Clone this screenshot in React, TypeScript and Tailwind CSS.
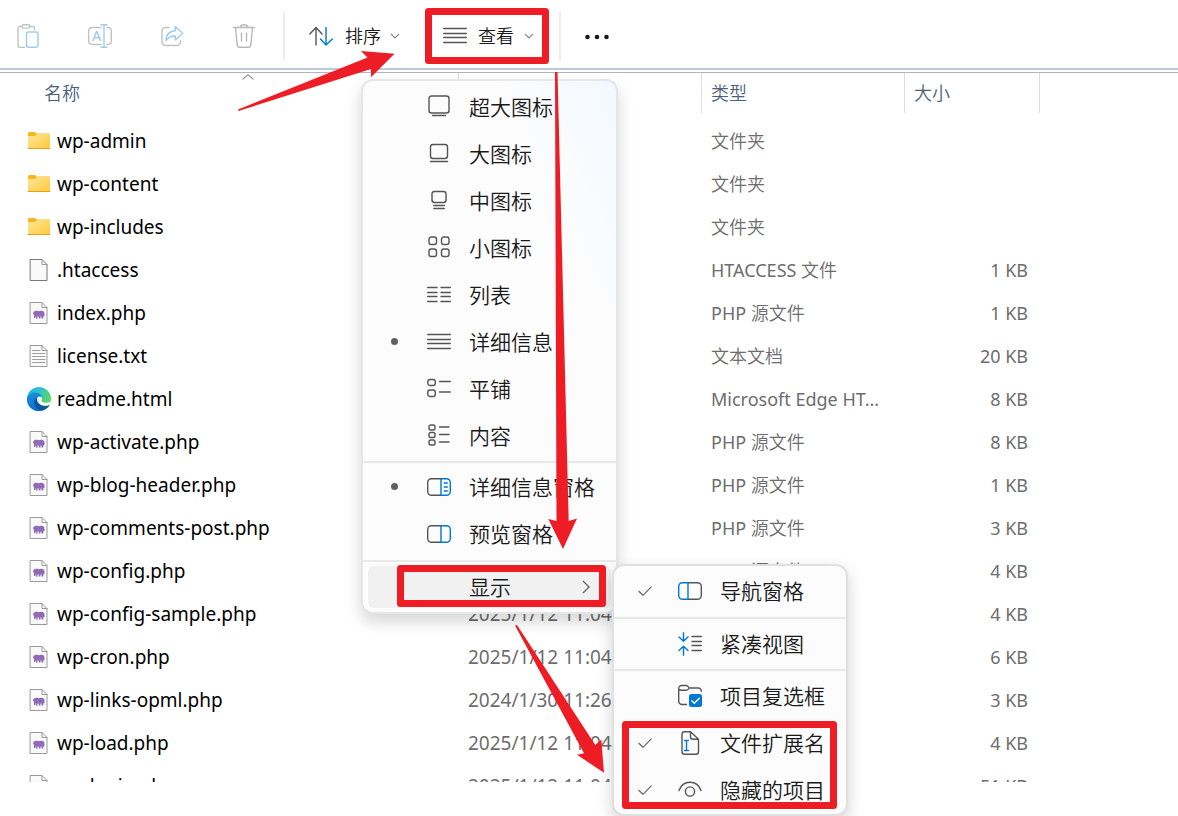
import type { ReactNode } from "react";

type IconProps = { children: ReactNode; className?: string };

const Icon = ({ children, className = "" }: IconProps) => (
  <svg
    viewBox="0 0 24 24"
    className={`h-6 w-6 shrink-0 ${className}`}
    fill="none"
    stroke="#555555"
    strokeWidth="1.4"
    strokeLinecap="round"
    strokeLinejoin="round"
    aria-hidden="true"
  >
    {children}
  </svg>
);

const ChevronDown = () => (
  <svg
    viewBox="0 0 10 6"
    className="h-1.5 w-2.5 shrink-0"
    fill="none"
    stroke="#8a8a8a"
    strokeWidth="1.2"
    aria-hidden="true"
  >
    <path d="M1 1l4 4 4-4" />
  </svg>
);

const PasteIcon = () => (
  <Icon>
    <g stroke="#c2c2c2">
      <path d="M6 2.5H4a2 2 0 0 0-2 2v17a2 2 0 0 0 2 2H8.5" />
      <path d="M14 2.5h2.5a2 2 0 0 1 2 2V5.5" />
      <rect x="6" y=".7" width="8" height="3.4" rx="1.7" />
    </g>
    <rect x="10.5" y="8" width="11.5" height="15.3" rx="2" stroke="#9fcbee" />
  </Icon>
);

const RenameIcon = () => (
  <Icon>
    <path
      d="M13 3.5H4A3.5 3.5 0 0 0 .7 7v10A3.5 3.5 0 0 0 4 20.5h9M19 3.5h1A3.5 3.5 0 0 1 23.3 7v10a3.5 3.5 0 0 1-3.3 3.5h-1"
      stroke="#c2c2c2"
    />
    <path d="M13 .7h6M16 .7v22.6M13 23.3h6" stroke="#9fcbee" />
    <text
      x="8.5"
      y="17"
      textAnchor="middle"
      fontSize="14"
      fontFamily="Noto Sans"
      fontWeight="500"
      fill="#9fcbee"
      stroke="none"
    >
      A
    </text>
  </Icon>
);

const ShareIcon = () => (
  <Icon>
    <path
      d="M9 3.5H5.5a3.5 3.5 0 0 0-3.5 3.5v11a3.5 3.5 0 0 0 3.5 3.5h11.5a3.5 3.5 0 0 0 3.5-3.5v-1"
      stroke="#c2c2c2"
    />
    <path
      d="M15.3 2.8v4C9.5 7 6.2 11 5.8 16.5c2.5-3.3 5.5-4.6 9.5-4.5v4l7.5-6.8z"
      stroke="#9fcbee"
    />
  </Icon>
);

const DeleteIcon = () => (
  <Icon>
    <path
      d="M1.5 3.5h21M8 3.5C8.5 1.5 10 .8 12 .8s3.5.7 4 2.7M3.5 3.5l1.7 17.7a2.2 2.2 0 0 0 2.2 2h9.2a2.2 2.2 0 0 0 2.2-2L20.5 3.5M9.5 9v8M14.5 9v8"
      stroke="#b8b8b8"
    />
  </Icon>
);

const SortIcon = () => (
  <Icon>
    <path d="M7 21V3.5M.8 10L7 3.5l6 6.5" />
    <path d="M17 3.5V21M11.5 15L17 21l6.3-6" stroke="#0078d4" />
  </Icon>
);

const LinesIcon = () => (
  <Icon>
    <path d="M.7 4.5h22.6M.7 9.5h22.6M.7 13.5h22.6M.7 18.5h22.6" />
  </Icon>
);

const ExtraLargeIcon = () => (
  <Icon>
    <rect x="2" y="1" width="20" height="17" rx="2.5" />
    <path d="M5.5 20.5h13" />
  </Icon>
);

const LargeIcon = () => (
  <Icon>
    <rect x="3.5" y="2.5" width="17" height="14" rx="2.5" />
    <path d="M3.5 19.5h17" />
  </Icon>
);

const MediumIcon = () => (
  <Icon>
    <rect x="5" y="2.5" width="14" height="11" rx="2.5" />
    <path d="M6.8 16.5h10.5M6.8 19.5h10.5" />
  </Icon>
);

const SmallIcon = () => (
  <Icon>
    <rect x="2" y="1" width="7.5" height="7.5" rx="2.2" />
    <rect x="14.5" y="1" width="7.5" height="7.5" rx="2.2" />
    <rect x="2" y="13" width="7.5" height="7.5" rx="2.2" />
    <rect x="14.5" y="13" width="7.5" height="7.5" rx="2.2" />
  </Icon>
);

const ListIcon = () => (
  <Icon>
    <path d="M.7 4.5h9.3M14 4.5h9.3M.7 9.5h9.3M14 9.5h9.3M.7 13.5h9.3M14 13.5h9.3M.7 18.5h9.3M14 18.5h9.3" />
  </Icon>
);

const TilesIcon = () => (
  <Icon>
    <rect x=".8" y="2.5" width="7.5" height="6" rx="2.2" />
    <rect x=".8" y="13" width="7.5" height="6.5" rx="2.2" />
    <path d="M12.5 4.5h10.8M12.5 15h10.8" />
  </Icon>
);

const ContentIcon = () => (
  <Icon>
    <rect x="2" y="1" width="6" height="5" rx="1.8" />
    <rect x="2" y="8.5" width="6" height="5" rx="1.8" />
    <rect x="2" y="16" width="6" height="5" rx="1.8" />
    <path d="M12.5 3h9.5M12.5 10.5h9.5M12.5 18h9.5" />
  </Icon>
);

const DetailsPaneIcon = () => (
  <Icon>
    <path d="M14 3.7H4.5A3.8 3.8 0 0 0 .7 7.5v9a3.8 3.8 0 0 0 3.8 3.8H14" />
    <path
      d="M14 3.7h5.5a3.8 3.8 0 0 1 3.8 3.8v9a3.8 3.8 0 0 1-3.8 3.8H14zM17.3 8h3M17.3 12h3M17.3 16h3"
      stroke="#0078d4"
    />
  </Icon>
);

const PreviewPaneIcon = () => (
  <Icon>
    <path d="M14 3.7H4.5A3.8 3.8 0 0 0 .7 7.5v9a3.8 3.8 0 0 0 3.8 3.8H14" />
    <path
      d="M14 3.7h5.5a3.8 3.8 0 0 1 3.8 3.8v9a3.8 3.8 0 0 1-3.8 3.8H14z"
      stroke="#0078d4"
    />
  </Icon>
);

const NavPaneIcon = () => (
  <Icon>
    <path d="M10 3.7h9.5a3.8 3.8 0 0 1 3.8 3.8v9a3.8 3.8 0 0 1-3.8 3.8H10" />
    <path
      d="M10 3.7H4.5A3.8 3.8 0 0 0 .7 7.5v9a3.8 3.8 0 0 0 3.8 3.8H10z"
      stroke="#0078d4"
    />
  </Icon>
);

const CompactIcon = () => (
  <Icon>
    <path
      d="M5.5.7v8.5M1 5l4.5 4.3L10 5M5.5 23.3v-9M1 18.5l4.5-4.3 4.5 4.3"
      stroke="#0078d4"
    />
    <path d="M14 4.5h9.3M14 9.5h9.3M14 13.5h9.3M14 18.5h9.3" />
  </Icon>
);

const ItemCheckIcon = () => (
  <Icon>
    <path d="M8.5 20.5H4A3.3 3.3 0 0 1 .7 17.2V4.5A3 3 0 0 1 3.7 1.5H8.2c1.5 0 2 .8 3 2.5h9a3.2 3.2 0 0 1 3.1 3.3M.9 5.5c.6.6 1.5.7 2.5.7h4.8c1.5 0 2.2-.9 3-2.2" />
    <rect x="11" y="10" width="13" height="13" rx="2.5" fill="#0078d4" stroke="none" />
    <path d="M13.8 16.8l2.5 2.5 5-5" stroke="#ffffff" />
  </Icon>
);

const ExtensionIcon = () => (
  <Icon>
    <path d="M12.5.8H6.5a2.5 2.5 0 0 0-2.5 2.5v17.4a2.5 2.5 0 0 0 2.5 2.5h11.5a2.5 2.5 0 0 0 2.5-2.5V8.3zM12.5.8v5a2.5 2.5 0 0 0 2.5 2.5h5.5" />
    <path d="M6.5 9.5h4M8.5 9.5v10M6.5 19.5h4" stroke="#0078d4" />
  </Icon>
);

const EyeIcon = () => (
  <Icon>
    <path d="M1 12.5C2.8 7 7 4.2 12 4.2s9.2 2.8 11 8.3" />
    <circle cx="12" cy="13.5" r="4.6" />
  </Icon>
);

const CheckMark = () => (
  <svg
    viewBox="0 0 14 10"
    className="mb-px h-2.5 w-3.5"
    fill="none"
    stroke="#666666"
    strokeWidth="1.2"
    aria-hidden="true"
  >
    <path d="M.5 5l4.5 4.3L13.5.7" />
  </svg>
);

type FileKind = "folder" | "file" | "php" | "text" | "edge";

const FileIcon = ({ kind }: { kind: FileKind }) => {
  if (kind === "folder") {
    return (
      <Icon>
        <path d="M1 4.5a1.5 1.5 0 0 1 1.5-1.5h5.5l1.5 1.5H23V10H1z" fill="#f8b51d" stroke="none" />
        <path d="M1 7h7l2-2h13v15H1z" fill="url(#folder)" stroke="none" />
        <path d="M1 19.5h22" stroke="#e5a31d" strokeWidth="1" />
      </Icon>
    );
  }

  if (kind === "edge") {
    return (
      <Icon>
        <g stroke="none">
          <circle cx="12" cy="12" r="12" fill="url(#edgeTop)" />
          <path
            d="M0 12C.5 8 4 5.5 8 5.5c4.5 0 7 3 7 5.5-.5-1-1.5-1.5-3-1.5-3 0-4.5 3-3.5 6.5 1 3.5 4 6.5 8 7-1.5.7-3 1-4.5 1C5 24-.5 18.5 0 12z"
            fill="url(#edgeBlue)"
          />
          <path
            d="M9.5 10.5c-3.5 2-3 7 0 10.2 2 2.1 4.5 3.3 7.5 2.3 2.8-1.2 4.8-3.2 5.8-5.2-4 2.2-10.3.8-12.3-3.3-.7-1.5-.5-3-1-4z"
            fill="#0f559f"
          />
          <path
            d="M10.5 11c.8-1.6 3.8-1.8 4.5 0 .4 1.1-1 1.8-.5 3 .8 1.8 5.5 2.6 9 .8.4 1.2 0 2.2-.7 3-4 2.2-10.3.8-12-2.8-.6-1.5-.8-3-.3-4z"
            fill="#ffffff"
          />
        </g>
      </Icon>
    );
  }

  return (
    <Icon>
      <path
        d="M3.5 1.5h11.5l5 5v16h-16.5z"
        fill="#fafafa"
        stroke={kind === "file" ? "#777777" : "#9a9a9a"}
        strokeWidth="1"
      />
      <path d="M15 1.5v5h5" stroke="#9a9a9a" strokeWidth="1" />
      {kind === "text" && (
        <path
          d="M5.5 6.5H13M5.5 9.5h12.5M5.5 12.5h12.5M5.5 15.5h12.5M5.5 18.5h12.5"
          stroke="#a0a0a0"
          strokeWidth="1"
        />
      )}
      {kind === "php" && (
        <path
          d="M6.500 11c1.5-1.5 3.5-1.5 5-.8 2-.8 4.5-.7 5.7 1 .4 1 .3 2.5.3 3.8l-1 .2-.3 2.3h-1.7v-2h-1v2h-1.7v-2h-1.3v2.3H9.2v-2.3H8.5v1.5H7V14c-1-.8-1.2-2-.5-3z"
          fill="#8f6bb5"
          stroke="none"
        />
      )}
    </Icon>
  );
};

type FileRow = {
  name: string;
  kind: FileKind;
  date?: string;
  app?: string;
  type?: string;
  size?: string;
};

const files: FileRow[] = [
  { name: "wp-admin", kind: "folder", type: "文件夹" },
  { name: "wp-content", kind: "folder", type: "文件夹" },
  { name: "wp-includes", kind: "folder", type: "文件夹" },
  { name: ".htaccess", kind: "file", app: "HTACCESS ", type: "文件", size: "1 KB" },
  { name: "index.php", kind: "php", app: "PHP ", type: "源文件", size: "1 KB" },
  { name: "license.txt", kind: "text", type: "文本文档", size: "20 KB" },
  { name: "readme.html", kind: "edge", app: "Microsoft Edge HT...", size: "8 KB" },
  { name: "wp-activate.php", kind: "php", app: "PHP ", type: "源文件", size: "8 KB" },
  { name: "wp-blog-header.php", kind: "php", app: "PHP ", type: "源文件", size: "1 KB" },
  { name: "wp-comments-post.php", kind: "php", app: "PHP ", type: "源文件", size: "3 KB" },
  { name: "wp-config.php", kind: "php", app: "PHP ", type: "源文件", size: "4 KB" },
  { name: "wp-config-sample.php", kind: "php", date: "2025/1/12 11:04", size: "4 KB" },
  { name: "wp-cron.php", kind: "php", date: "2025/1/12 11:04", size: "6 KB" },
  { name: "wp-links-opml.php", kind: "php", date: "2024/1/30 11:26", size: "3 KB" },
  { name: "wp-load.php", kind: "php", date: "2025/1/12 11:04", size: "4 KB" },
  { name: "wp-login.php", kind: "php", date: "2025/1/12 11:04", size: "51 KB" },
];

type MenuRowProps = {
  icon: ReactNode;
  label: string;
  mark?: "dot" | "check";
};

const MenuRow = ({ icon, label, mark }: MenuRowProps) => (
  <button
    type="button"
    role={mark === "check" ? "menuitemcheckbox" : "menuitemradio"}
    aria-checked={mark !== undefined}
    className="flex h-[47px] w-full items-center text-left"
  >
    <span className="flex w-16 shrink-0 justify-center pr-0.5">
      {mark === "dot" && (
        <span className="mb-0.5 h-[7px] w-[7px] rounded-full bg-[#606060]" />
      )}
      {mark === "check" && <CheckMark />}
    </span>
    <span className="mb-px">{icon}</span>
    <span className="ml-[18px] whitespace-nowrap">{label}</span>
  </button>
);

const Separator = () => <hr className="border-0 border-t-2 border-[#e9e9e9]" />;

const Toolbar = () => (
  <header className="flex h-[70px] items-center border-b-2 border-[#bcc8d8] pt-1 pl-4 text-lg font-[350]">
    <div className="flex items-center gap-12">
      <button type="button" aria-label="粘贴">
        <PasteIcon />
      </button>
      <button type="button" aria-label="重命名">
        <RenameIcon />
      </button>
      <button type="button" aria-label="共享">
        <ShareIcon />
      </button>
      <button type="button" aria-label="删除">
        <DeleteIcon />
      </button>
    </div>

    <span className="ml-[27px] h-12 w-0.5 bg-[#ededed]" />

    <button type="button" className="ml-6 flex items-center">
      <SortIcon />
      <span className="mr-[9px] ml-3">排序</span>
      <ChevronDown />
    </button>

    <button type="button" className="ml-[43px] flex items-center">
      <LinesIcon />
      <span className="mr-[10px] ml-[11px]">查看</span>
      <ChevronDown />
    </button>

    <span className="ml-[25px] h-12 w-0.5 bg-[#ededed]" />

    <button type="button" aria-label="更多" className="ml-6">
      <Icon>
        <g fill="#1a1a1a" stroke="none">
          <circle cx="2.5" cy="13" r="2.3" />
          <circle cx="12" cy="13" r="2.3" />
          <circle cx="21.5" cy="13" r="2.3" />
        </g>
      </Icon>
    </button>
  </header>
);

const FileTable = () => (
  <table className="w-full table-fixed border-collapse text-lg">
    <colgroup>
      <col className="w-[459px]" />
      <col className="w-[243px]" />
      <col className="w-[203px]" />
      <col className="w-[135px]" />
      <col />
    </colgroup>
    <thead className="text-left text-[#4c607a]">
      <tr>
        <th className="relative p-0 font-[350]">
          <div className="mb-1.5 flex h-10 items-center border-r border-[#dedede] pl-11">
            名称
          </div>
          <svg
            viewBox="0 0 12 6"
            className="absolute top-px left-[242px] h-1.5 w-3"
            fill="none"
            stroke="#666666"
            aria-hidden="true"
          >
            <path d="M.5 5.5L6 .7l5.5 4.8" />
          </svg>
        </th>
        <th className="p-0">
          <div className="mb-1.5 h-10 border-r border-[#dedede]" />
        </th>
        <th className="p-0 font-[350]">
          <div className="mb-1.5 flex h-10 items-center border-r border-[#dedede] pl-[9px]">
            类型
          </div>
        </th>
        <th className="p-0 font-[350]">
          <div className="mb-1.5 flex h-10 items-center border-r border-[#dedede] pl-[9px]">
            大小
          </div>
        </th>
        <th className="p-0" />
      </tr>
    </thead>
    <tbody className="text-[#6d6d6d]">
      {files.map((file) => (
        <tr key={file.name} className="h-[43px]">
          <td className="p-0 pt-0.5 pl-[27px] text-[19px] text-black">
            <div className="flex items-center gap-1.5">
              <FileIcon kind={file.kind} />
              {file.name}
            </div>
          </td>
          <td className="p-0 pt-0.5 pl-[9px] text-[19px] whitespace-nowrap">{file.date}</td>
          <td className="p-0 pl-[9px] whitespace-nowrap">
            {file.app}
            <span className="font-[350]">{file.type}</span>
          </td>
          <td className="p-0 pr-3 text-right whitespace-nowrap">{file.size}</td>
          <td />
        </tr>
      ))}
    </tbody>
  </table>
);

const ViewMenu = () => (
  <div
    role="menu"
    aria-label="查看"
    className="absolute top-[79px] left-[361px] w-[257px] rounded-xl border-2 border-[#e6e6e6] bg-[#fcfcfc] bg-linear-to-bl from-[#f3f9ff] via-[#fcfcfc] via-25% to-[#fcfcfc] text-[21px] font-[350] text-[#1a1a1a] shadow-[0_8px_16px_rgba(0,0,0,0.16)]"
  >
    <div className="pt-[3px] pb-px">
      <MenuRow icon={<ExtraLargeIcon />} label="超大图标" />
      <MenuRow icon={<LargeIcon />} label="大图标" />
      <MenuRow icon={<MediumIcon />} label="中图标" />
      <MenuRow icon={<SmallIcon />} label="小图标" />
      <MenuRow icon={<ListIcon />} label="列表" />
      <MenuRow icon={<LinesIcon />} label="详细信息" mark="dot" />
      <MenuRow icon={<TilesIcon />} label="平铺" />
      <MenuRow icon={<ContentIcon />} label="内容" />
    </div>
    <Separator />
    <div className="pt-px pb-0.5">
      <MenuRow icon={<DetailsPaneIcon />} label="详细信息窗格" mark="dot" />
      <MenuRow icon={<PreviewPaneIcon />} label="预览窗格" />
    </div>
    <Separator />
    <div className="px-[5px] py-1">
      <button
        type="button"
        role="menuitem"
        aria-haspopup="menu"
        aria-expanded="true"
        className="flex h-[42px] w-full items-center justify-between rounded-md bg-[#f1f1f1] pt-0.5 pr-[21px] pl-[101px]"
      >
        显示
        <svg
          viewBox="0 0 8 14"
          className="mb-0.5 h-3.5 w-2"
          fill="none"
          stroke="#666666"
          strokeWidth="1.4"
          aria-hidden="true"
        >
          <path d="M1 1l6 6-6 6" />
        </svg>
      </button>
    </div>
  </div>
);

const ShowMenu = () => (
  <div
    role="menu"
    aria-label="显示"
    className="absolute top-[564px] left-[612px] w-[236px] rounded-xl border-2 border-[#e0e0e0] bg-[#fcfcfc] text-[21px] font-[350] text-[#1a1a1a] shadow-[0_6px_16px_rgba(0,0,0,0.18)]"
  >
    <div className="py-0.5">
      <MenuRow icon={<NavPaneIcon />} label="导航窗格" mark="check" />
    </div>
    <Separator />
    <div className="pt-0.5 pb-px">
      <MenuRow icon={<CompactIcon />} label="紧凑视图" />
    </div>
    <Separator />
    <div className="pt-0.5">
      <MenuRow icon={<ItemCheckIcon />} label="项目复选框" />
      <MenuRow icon={<ExtensionIcon />} label="文件扩展名" mark="check" />
      <MenuRow icon={<EyeIcon />} label="隐藏的项目" mark="check" />
    </div>
  </div>
);

// red boxes and arrows that walk through the steps
const Annotations = () => (
  <svg
    width="1178"
    height="816"
    viewBox="0 0 1178 816"
    className="pointer-events-none absolute top-0 left-0 max-w-none"
    aria-hidden="true"
  >
    <g fill="none" stroke="#ee1c25" strokeWidth="7" strokeLinejoin="round">
      <rect x="428.5" y="11.5" width="117" height="49" />
      <rect x="400.5" y="568.5" width="202" height="35" />
      <rect x="625.5" y="724.5" width="208" height="81" />
    </g>
    <g fill="#ee1c25">
      <path d="M238 109.5L367.5 57.5 361 51l33.5 2.7-23.5 23.5v-8.2L238.5 111z" />
      <path d="M555 72h2.5L568.7 521l8.3-2.5-14 30.5-14.7-30 8.2 2z" />
      <path d="M515 625.5l2-.5 78.3 120 6-5.5 2.7 33.3-27-18 7-1.5z" />
    </g>
  </svg>
);

const App = () => {
  return (
    <div className="relative min-h-screen overflow-hidden bg-white font-['Noto_Sans','Noto_Sans_CJK_SC',sans-serif] text-[#1a1a1a]">
      {/* shared gradients for the file icons */}
      <svg className="absolute h-0 w-0" aria-hidden="true">
        <defs>
          <linearGradient id="folder" x1="0" y1="0" x2="1" y2="1">
            <stop offset="0" stopColor="#ffe79c" />
            <stop offset="1" stopColor="#ffc937" />
          </linearGradient>
          <linearGradient id="edgeTop" x1="0" y1="0" x2="1" y2=".4">
            <stop offset=".2" stopColor="#2bb4e6" />
            <stop offset=".6" stopColor="#35c6c0" />
            <stop offset="1" stopColor="#63d957" />
          </linearGradient>
          <linearGradient id="edgeBlue" x1="0" y1="0" x2=".5" y2="1">
            <stop offset="0" stopColor="#1b93dd" />
            <stop offset="1" stopColor="#0a6ecb" />
          </linearGradient>
        </defs>
      </svg>

      <Toolbar />
      <main className="mt-0.5 h-[710px] overflow-hidden border-t border-[#b4b4b4]">
        <FileTable />
      </main>

      <ViewMenu />
      <ShowMenu />
      <Annotations />
    </div>
  );
};

export default App;
